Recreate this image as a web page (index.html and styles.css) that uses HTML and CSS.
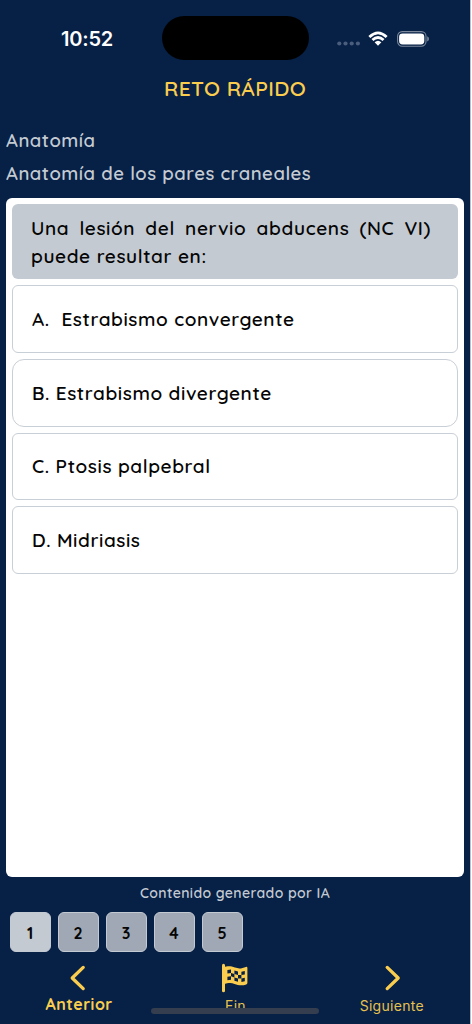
FILE: index.html
```html
<!DOCTYPE html>
<html lang="es">
  <head>
    <meta charset="UTF-8" />
    <meta name="viewport" content="width=device-width, initial-scale=1.0" />
    <title>Reto rápido</title>
    <link rel="stylesheet" href="styles.css">
  </head>
  <body>
    <div class="screen">
      <header class="statusbar">
        <span class="clock">10:52</span>
        <div class="island"></div>
        <div class="status-icons">
          <svg class="dots" width="24" height="5" viewBox="0 0 24 5">
            <circle cx="2.3" cy="2.5" r="2.1" />
            <circle cx="8.5" cy="2.5" r="2.1" />
            <circle cx="14.7" cy="2.5" r="2.1" />
            <circle cx="20.9" cy="2.5" r="2.1" />
          </svg>
          <svg class="wifi" width="20" height="15" viewBox="0 0 20 15">
            <path d="M0.4 4.9 Q10 -4.1 19.6 4.9 L17.7 6.9 Q10 -0.3 2.3 6.9 Z" />
            <path d="M3.5 8.1 Q10 2.1 16.5 8.1 L14.6 10 Q10 5.9 5.4 10 Z" />
            <path d="M6.6 11.2 Q10 8.2 13.4 11.2 L10 14.7 Z" />
          </svg>
          <svg class="battery" width="33" height="16" viewBox="0 0 33 16">
            <rect class="shell" x="0.6" y="0.6" width="28.4" height="14.6" rx="4.6" />
            <rect x="2.1" y="2.5" width="25.2" height="10.9" rx="3.4" />
            <path class="tip" d="M30.2 5.3 Q32 6 32 7.9 Q32 9.8 30.2 10.5 Z" />
          </svg>
        </div>
      </header>

      <h1 class="title">RETO RÁPIDO</h1>

      <div class="topic">
        <p class="subject">Anatomía</p>
        <p class="chapter">Anatomía de los pares craneales</p>
      </div>

      <main class="card">
        <div class="question">
          <p class="first">Una lesión del nervio abducens (NC VI)</p>
          <p class="second">puede resultar en:</p>
        </div>
        <button class="option a">A.&nbsp; Estrabismo convergente</button>
        <button class="option b">B. Estrabismo divergente</button>
        <button class="option c">C. Ptosis palpebral</button>
        <button class="option d">D. Midriasis</button>
      </main>

      <p class="note"><span>Contenido generado por IA</span></p>

      <div class="pages">
        <button class="page active">1</button>
        <button class="page">2</button>
        <button class="page">3</button>
        <button class="page">4</button>
        <button class="page">5</button>
      </div>

      <nav class="nav">
        <a class="nav-item prev">
          <svg width="30" height="30" viewBox="0 0 30 30">
            <path class="chevron" d="M19.2 4.4 L8.2 15 L19.2 25.6" />
          </svg>
          <span>Anterior</span>
        </a>
        <a class="nav-item end">
          <svg width="30" height="30" viewBox="0 0 30 30">
            <path class="pole" d="M3.5 2.3 V27.8" />
            <path class="cloth" d="M3.5 4.4 C8 2.6 11 3.2 15 4.6 C19 6 22 5.4 25.9 3.9 Q27.4 3.6 27.4 5 V20 Q27.4 21 26.3 21.4 C22 23 18 22.2 14.5 20.9 C11 19.6 8 20 3.5 21.3 Z" />
            <path class="check" d="M7.4 7 L11 6.5 V9.9 L7.4 10.4 Z M14.4 7.6 L18 8.6 V12 L14.4 11 Z M21.4 8.7 L24.8 8 V11.4 L21.4 12.1 Z M11 9.9 L14.4 11 V14.4 L11 13.3 Z M18 12 L21.4 12.1 V15.5 L18 15.4 Z M7.4 13.8 L11 13.3 V16.7 L7.4 17.2 Z M14.4 14.4 L18 15.4 V18.8 L14.4 17.8 Z M21.4 15.5 L24.8 14.8 V18.2 L21.4 18.9 Z" />
          </svg>
          <span>Fin</span>
        </a>
        <a class="nav-item next">
          <svg width="30" height="30" viewBox="0 0 30 30">
            <path class="chevron" d="M10.2 4.4 L21.2 15 L10.2 25.6" />
          </svg>
          <span>Siguiente</span>
        </a>
      </nav>
      <div class="home-bar"></div>
    </div>
  </body>
</html>
```
FILE: styles.css
```css
* {
  margin: 0;
  padding: 0;
  box-sizing: border-box;
}
body {
  background: #fff;
  font-family: Quicksand, Lato, "Open Sans", sans-serif;
}
button {
  font-family: inherit;
  color: #050505;
}
svg {
  display: block;
}
.screen {
  position: relative;
  width: 471px;
  height: 1024px;
  border-right: 1px solid #b9c1ce;
  background: #062046;
  overflow: hidden;
}

/* status bar */
.statusbar {
  height: 75px;
  padding: 16px 41px 0 61px;
  display: grid;
  grid-template-columns: 101px 147px 1fr;
  align-items: start;
}
.clock {
  font-family: Inter, sans-serif;
  font-size: 20px;
  font-weight: 600;
  line-height: 24px;
  letter-spacing: -0.2px;
  padding-top: 11px;
  color: #fff;
}
.island {
  height: 44px;
  border-radius: 22px;
  background: #000;
}
.status-icons {
  display: flex;
  padding: 14px 0 0 28px;
  fill: #fff;
}
.dots {
  margin-top: 11px;
  fill: #4a5d7c;
}
.wifi {
  margin: 1px 0 0 7px;
}
.battery {
  margin: 1px 0 0 9px;
}
.shell {
  fill: none;
  stroke: #7b889c;
  stroke-width: 1.1;
}
.tip {
  fill: #7b889c;
}

.title {
  height: 27px;
  text-align: center;
  font-size: 21px;
  line-height: 26px;
  font-weight: 600;
  letter-spacing: 0.4px;
  color: #fbcd4f;
}
.topic {
  height: 96px;
  padding: 22px 6px 0;
  font-size: 18.5px;
  line-height: 33px;
  font-weight: 600;
  letter-spacing: 0.52px;
  color: #c4cad2;
}

/* question card */
.card {
  height: 679px;
  margin: 0 6px;
  padding: 6px;
  border-radius: 6px;
  background: #fff;
  display: flex;
  flex-direction: column;
  gap: 6px;
}
.question {
  height: 75px;
  padding: 10px 27px 0 19px;
  border-radius: 6px;
  background: #c4cad2;
  font-size: 19px;
  line-height: 28px;
  font-weight: 600;
  letter-spacing: 0.6px;
  color: #050505;
}
.first {
  text-align: justify;
  text-align-last: justify;
  white-space: nowrap;
}
.option {
  height: 67.8px;
  padding: 0 19px;
  border: 1px solid #c9cfd6;
  border-radius: 6px;
  background: #fff;
  font-size: 19px;
  font-weight: 600;
  letter-spacing: 0.58px;
  text-align: left;
}
.option.b {
  border-radius: 12px;
}

.note {
  height: 35px;
  text-align: center;
  font-size: 14px;
  line-height: 33px;
  font-weight: 600;
  letter-spacing: 0.38px;
  color: #c4cad2;
}
.pages {
  display: flex;
  gap: 7px;
  padding-left: 9.5px;
}
.page {
  width: 41px;
  height: 40px;
  padding-top: 1px;
  border: 1px solid #c4cad2;
  border-radius: 6px;
  background: #9fa8b4;
  font-size: 16px;
  font-weight: 700;
}
.page.active {
  background: #c4cad2;
}

/* bottom navigation */
.nav {
  display: grid;
  grid-template-columns: repeat(3, 1fr);
  padding: 11px 0 0 1px;
}
.nav-item {
  display: flex;
  flex-direction: column;
  align-items: center;
  color: #e7c04f;
}
.prev {
  font-size: 16px;
  font-weight: 700;
  line-height: 22px;
  letter-spacing: 0.5px;
  color: #fbcd4f;
}
.end,
.next {
  font-family: Inter, sans-serif;
  font-size: 14px;
  letter-spacing: 0.3px;
  line-height: 25px;
}
.chevron {
  fill: none;
  stroke: #fbcd4f;
  stroke-width: 3.3;
  stroke-linecap: round;
  stroke-linejoin: round;
}
.pole {
  stroke: #fbcd4f;
  stroke-width: 3;
  stroke-linecap: round;
}
.cloth {
  fill: #fbcd4f;
}
.check {
  fill: #062046;
}
.home-bar {
  position: absolute;
  left: 151px;
  bottom: 10px;
  width: 168px;
  height: 6px;
  border-radius: 3px;
  background: #343e4f;
}
```
